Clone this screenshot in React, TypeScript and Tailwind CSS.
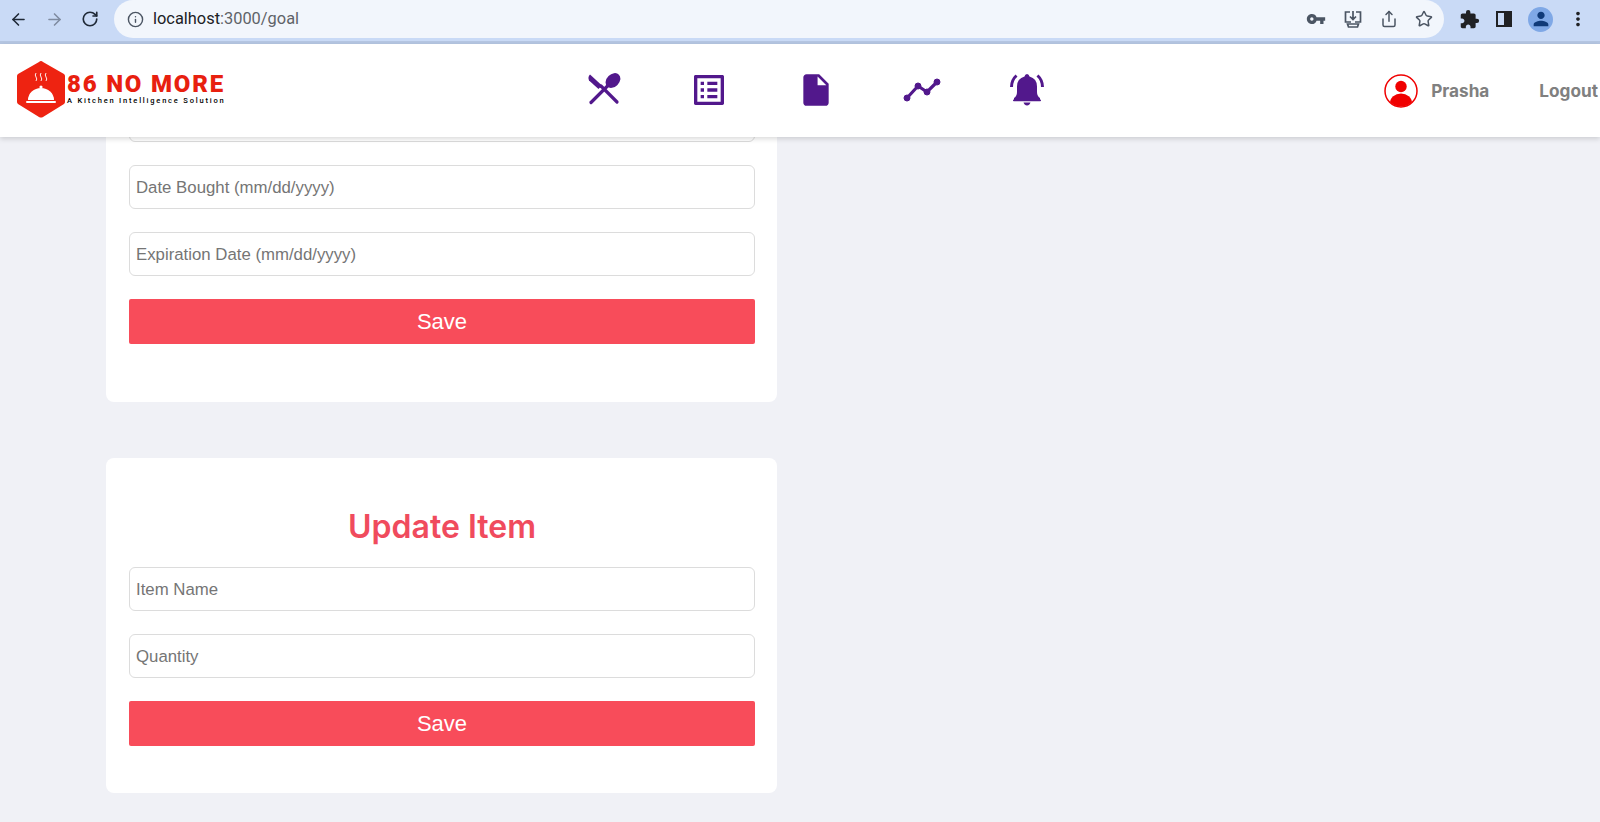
import { ArrowLeft, ArrowRight, RotateCw, Info, Share, Star } from "lucide-react";
import { MdExtension, MdVpnKey, MdMoreVert, MdPerson, MdListAlt, MdInsertDriveFile } from "react-icons/md";

function Logo() {
  return (
    <div className="flex items-center">
      <svg width="50" height="58" viewBox="0 0 50 58">
        <path d="M25 1 Q26 1 27 2 L48 14 Q49 15 49 16 L49 42 Q49 43 48 44 L27 57 Q25 58 23 57 L2 44 Q1 43 1 42 L1 16 Q1 15 2 14 L23 2 Q24 1 25 1Z" fill="#ee2311" />
        <path d="M12 40 A13 12 0 0 1 38 40Z" fill="#fff" />
        <rect x="10" y="41" width="30" height="2" rx="1" fill="#fff" />
        <circle cx="25" cy="27" r="1.600" fill="#fff" />
        <path d="M20 13 q-1.500 2 0 4 q1.500 2 0 4 M25 13 q-1.500 2 0 4 q1.500 2 0 4 M30 13 q-1.500 2 0 4 q1.500 2 0 4" stroke="#fff" strokeWidth="0.9" fill="none" />
      </svg>
      <div className="flex flex-col ml-[1px] -mt-[2px]">
        <span className="font-['Roboto',sans-serif] font-black text-[24px] leading-[24px] tracking-[1.8px] text-[#e8200f] whitespace-nowrap">86 NO MORE</span>
        <span className="font-['Roboto',sans-serif] font-medium text-[7.5px] leading-[9px] tracking-[1.8px] text-black whitespace-nowrap">A Kitchen Intelligence Solution</span>
      </div>
    </div>
  );
}

function ChromeBar() {
  return (
    <div className="h-[44px] shrink-0 bg-[#c9daf6] border-b-[3px] border-[#b5c6e2] flex items-start">
      <div className="flex items-center h-[38px] pl-[9px] gap-[17px] text-[#1f2937]">
        <ArrowLeft size={19} strokeWidth={2} />
        <ArrowRight size={19} strokeWidth={2} className="text-[#7f8ba0]" />
        <RotateCw size={18} strokeWidth={2.2} />
      </div>
      <div className="ml-[15px] w-[1330px] h-[38px] bg-[#f2f6fc] rounded-r-full rounded-l-full flex items-center pl-[13px] pr-[11px]">
        <Info size={17} className="text-[#4b5563]" />
        <span className="ml-[9px] text-[16.4px] font-['Roboto',sans-serif] text-[#5f6368]">
          <span className="text-[#202124]">localhost</span>:3000/goal
        </span>
        <div className="ml-auto flex items-center gap-[17px] text-[#4b5563]">
          <MdVpnKey size={20} />
          <svg width="20" height="20" viewBox="0 0 20 20" fill="none" stroke="currentColor" strokeWidth="1.700">
            <path d="M7 3H2.500v10H8M13 3h4.500v10H12M10 2v8M7 7.500l3 3 3-3" />
            <path d="M4.500 15h11l-1 3h-9z" />
          </svg>
          <Share size={18} />
          <Star size={18} strokeWidth={2} />
        </div>
      </div>
      <div className="ml-[15px] flex items-center h-[38px] gap-[13px] text-[#202124]">
        <MdExtension size={21} />
        <div className="w-[16px] h-[16px] border-2 border-[#202124] flex justify-end ml-[3px]">
          <div className="w-[6px] bg-[#202124]" />
        </div>
        <div className="w-[25px] h-[25px] rounded-full bg-[#7fa8e6] flex items-center justify-center ml-[3px]">
          <MdPerson size={22} className="text-[#103a78]" />
        </div>
        <MdMoreVert size={22} className="ml-[1px]" />
      </div>
    </div>
  );
}

function SpoonKnife() {
  return (
    <svg width="34" height="33" viewBox="0 0 34 33" fill="#52188c" stroke="none">
      <path d="M3 1.500 L15 12.500 L11.500 16 L2 7.500 Q0.500 4 3 1.500Z" />
      <path d="M14 13 L30 29" stroke="#52188c" strokeWidth="3.200" strokeLinecap="round" />
      <path d="M4 29.500 L21 12.500" stroke="#52188c" strokeWidth="3.200" strokeLinecap="round" />
      <ellipse cx="26" cy="7.500" rx="6.300" ry="8.300" transform="rotate(45 26 7.500)" />
    </svg>
  );
}

function Trend() {
  return (
    <svg width="38" height="24" viewBox="0 0 38 24" fill="#52188c" stroke="#52188c">
      <path d="M4 20 L15 8 L24 14 L34 4" strokeWidth="3.200" fill="none" />
      <circle cx="4" cy="20" r="3" />
      <circle cx="15" cy="8" r="3" />
      <circle cx="24" cy="14" r="3" />
      <circle cx="34" cy="4" r="3" />
    </svg>
  );
}

function BellRinging() {
  return (
    <svg width="36" height="34" viewBox="0 0 36 34" fill="#52188c">
      <path d="M18 1 Q20 1 20.500 3.500 Q28 5.500 28 13.500 L28 19 Q28 23 31 25 L31 27 L5 27 L5 25 Q8 23 8 19 L8 13.500 Q8 5.500 15.500 3.500 Q16 1 18 1Z" />
      <rect x="4" y="26.500" width="28" height="1.800" rx="0.800" />
      <path d="M14.500 29.500 H21.500 Q20.500 32.500 18 32.500 Q15.500 32.500 14.500 29.500Z" />
      <path d="M2.500 14 Q2.500 7 7.500 2.500 M33.500 14 Q33.500 7 28.500 2.500" fill="none" stroke="#52188c" strokeWidth="3" />
    </svg>
  );
}

function Navbar() {
  return (
    <nav className="relative z-10 h-[93px] shrink-0 bg-white shadow-[0_2px_5px_rgba(0,0,0,0.15)] flex items-center">
      <div className="w-[587px] pl-[16px] shrink-0 -mt-[3px]">
        <Logo />
      </div>
      <div className="flex items-center w-[458px] justify-between text-[#52188c] -mt-[2px]">
        <SpoonKnife />
        <MdListAlt size={40} />
        <MdInsertDriveFile size={38} />
        <Trend />
        <BellRinging />
      </div>
      <div className="ml-auto flex items-center font-['Inter',sans-serif] font-bold text-[17.2px] text-[#808080]">
        <svg width="34" height="34" viewBox="0 0 34 34">
          <defs>
            <clipPath id="circ">
              <circle cx="17" cy="17" r="15.500" />
            </clipPath>
          </defs>
          <circle cx="17" cy="17" r="16" fill="none" stroke="#f00000" strokeWidth="1.500" />
          <circle cx="17" cy="12.500" r="5.700" fill="#f00000" />
          <ellipse cx="17" cy="29" rx="11" ry="9.500" fill="#f00000" clipPath="url(#circ)" />
        </svg>
        <span className="ml-[13px]">Prasha</span>
        <span className="ml-[50px] mr-[2px]">Logout</span>
      </div>
    </nav>
  );
}

function Field({ label }: { label: string }) {
  return (
    <input
      placeholder={label}
      className="block w-full h-[44px] border border-[#dcdcdc] rounded-[6px] bg-white pl-[6px] pr-[6px] pt-[1px] font-['Liberation_Sans',sans-serif] text-[16.8px] placeholder:text-[#757575] outline-none"
    />
  );
}

function SaveButton() {
  return (
    <button className="w-full h-[45px] bg-[#f84c5a] rounded-[2px] text-white text-[22px] font-['Liberation_Sans',sans-serif]">
      Save
    </button>
  );
}

export default function App() {
  return (
    <div className="h-[822px] overflow-hidden bg-[#f0f1f6] flex flex-col">
      <ChromeBar />
      <Navbar />
      <main className="-mt-[39px] pl-[106px] w-[777px]">
        <section className="bg-white rounded-[8px] pl-[23px] pr-[22px] pb-[58px]">
          <div className="flex flex-col gap-[23px]">
            <Field label="Quantity" />
            <Field label="Date Bought (mm/dd/yyyy)" />
            <Field label="Expiration Date (mm/dd/yyyy)" />
            <SaveButton />
          </div>
        </section>
        <section className="mt-[56px] bg-white rounded-[8px] pl-[23px] pr-[22px] pt-[47px] pb-[47px]">
          <h2 className="text-center font-['Inter',sans-serif] font-semibold text-[32px] leading-[44px] text-[#f04b5d] mb-[18px]">Update Item</h2>
          <div className="flex flex-col gap-[23px]">
            <Field label="Item Name" />
            <Field label="Quantity" />
            <SaveButton />
          </div>
        </section>
      </main>
    </div>
  );
}
